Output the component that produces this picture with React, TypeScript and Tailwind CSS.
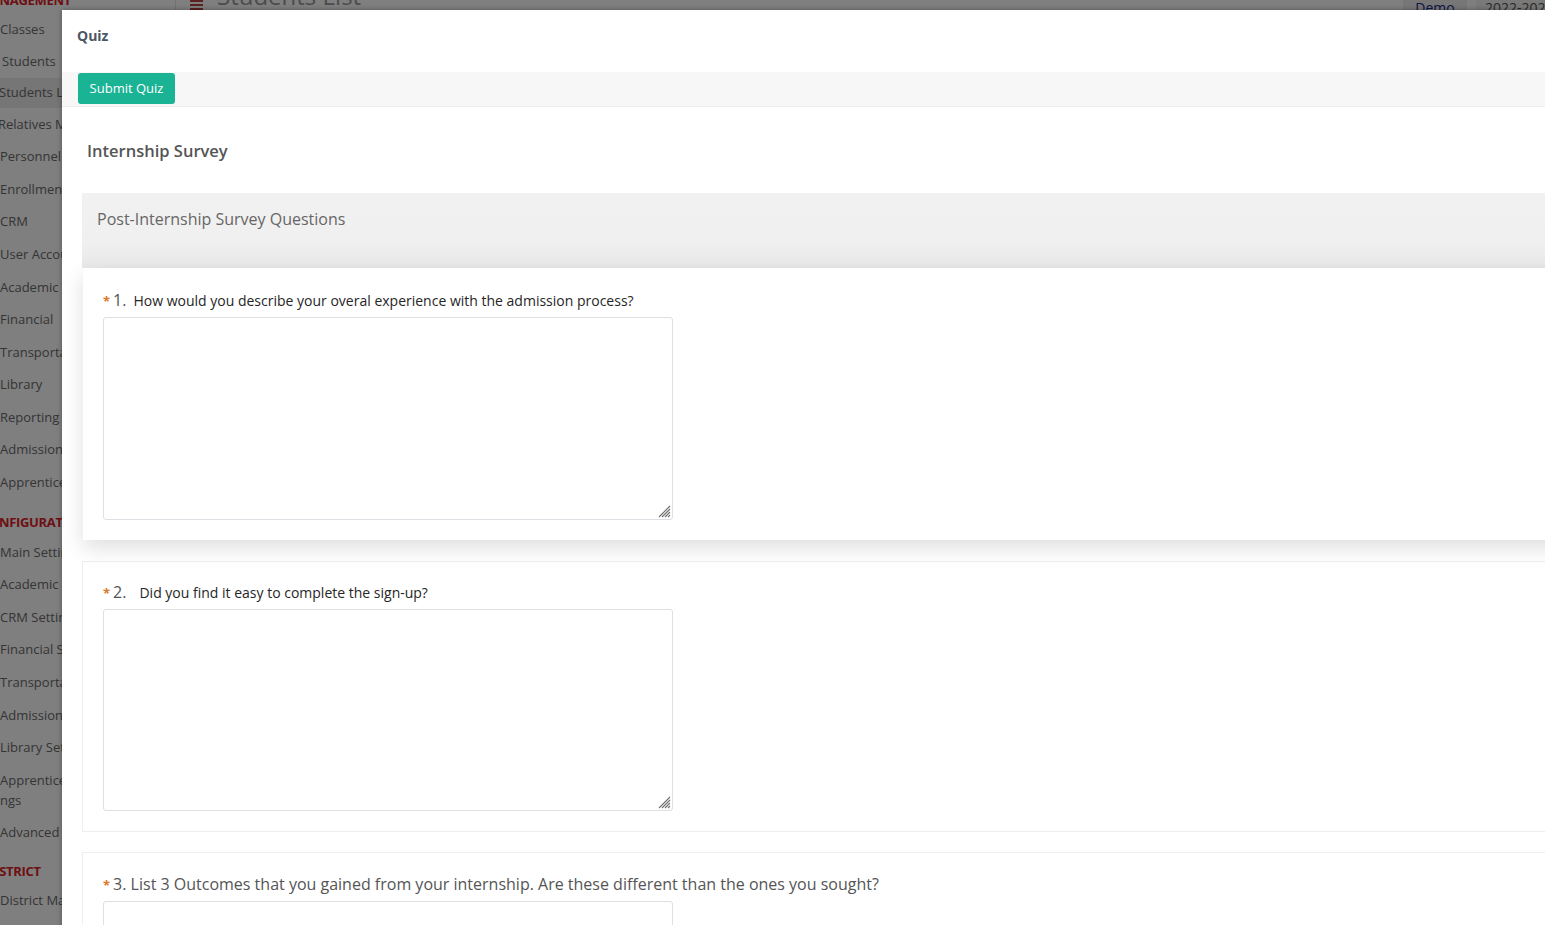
import React from 'react'

type NavItem = { label: string; h: string; kind: 'head' | 'item'; shift?: string; active?: boolean; lines?: string[]; pad?: string }

const NAV: NavItem[] = [
  { label: 'MANAGEMENT', h: 'h-[28px]', kind: 'head', shift: '-ml-[21px]' },
  { label: 'Classes', h: 'h-[32px]', kind: 'item' },
  { label: 'Students', h: 'h-[32px]', kind: 'item', shift: 'ml-[2px]' },
  { label: 'Students List', h: 'h-[30px]', kind: 'item', shift: '-ml-[1px]', active: true },
  { label: 'Relatives Management', h: 'h-[32.6px]', kind: 'item', shift: '-ml-[2px]' },
  { label: 'Personnel', h: 'h-[32.6px]', kind: 'item' },
  { label: 'Enrollment', h: 'h-[32.6px]', kind: 'item' },
  { label: 'CRM', h: 'h-[32.6px]', kind: 'item' },
  { label: 'User Accounts', h: 'h-[32.6px]', kind: 'item' },
  { label: 'Academic Terms', h: 'h-[32.6px]', kind: 'item' },
  { label: 'Financial', h: 'h-[32.6px]', kind: 'item' },
  { label: 'Transportation', h: 'h-[32.6px]', kind: 'item' },
  { label: 'Library', h: 'h-[32.6px]', kind: 'item' },
  { label: 'Reporting', h: 'h-[32.6px]', kind: 'item' },
  { label: 'Admission', h: 'h-[32.6px]', kind: 'item' },
  { label: 'Apprenticeship', h: 'h-[32.6px]', kind: 'item' },
  { label: 'CONFIGURATION', h: 'h-[37px]', kind: 'head', shift: '-ml-[19px]', pad: 'pt-[14px]' },
  { label: 'Main Settings', h: 'h-[32.6px]', kind: 'item' },
  { label: 'Academic Settings', h: 'h-[32.6px]', kind: 'item' },
  { label: 'CRM Settings', h: 'h-[32.6px]', kind: 'item' },
  { label: 'Financial Settings', h: 'h-[32.6px]', kind: 'item' },
  { label: 'Transportation Settings', h: 'h-[32.6px]', kind: 'item' },
  { label: 'Admission Settings', h: 'h-[32.6px]', kind: 'item' },
  { label: 'Library Settings', h: 'h-[32.6px]', kind: 'item' },
  { label: '', h: 'h-[52px]', kind: 'item', lines: ['Apprenticeship Setti', 'ngs'] },
  { label: 'Advanced Options', h: 'h-[32px]', kind: 'item' },
  { label: 'DISTRICT', h: 'h-[36px]', kind: 'head', shift: '-ml-[14px]', pad: 'pt-[14px]' },
  { label: 'District Management', h: 'h-[32px]', kind: 'item' },
]

const QUESTIONS = [
  { n: '1.', text: 'How would you describe your overal experience with the admission process?', gap: 'ml-[7px]', small: true },
  { n: '2.', text: 'Did you find it easy to complete the sign-up?', gap: 'ml-[13px]', small: true },
  { n: '3.', text: 'List 3 Outcomes that you gained from your internship. Are these different than the ones you sought?', gap: 'ml-[4px]', small: false },
]

function Sidebar() {
  return (
    <aside className="w-[176px] shrink-0 bg-white border-r border-[#e4e4e4] overflow-hidden">
      <div className="-mt-[14px] flex flex-col">
        {NAV.map((n, i) => (
          <div
            key={i}
            className={`${n.h} ${n.pad ?? ''} flex ${n.pad ? 'items-start' : 'items-center'} whitespace-nowrap ${n.active ? 'bg-[#ececec]' : ''}`}
          >
            {n.kind === 'head' ? (
              <span className={`${n.shift ?? ''} text-[13px] leading-[18px] font-bold text-[#dc2028] tracking-tight`}>{n.label}</span>
            ) : n.lines ? (
              <div className="flex flex-col text-[13px] leading-[20px] text-[#6a6a6a]">
                {n.lines.map(l => <span key={l}>{l}</span>)}
              </div>
            ) : (
              <span className={`${n.shift ?? ''} text-[13px] text-[#6a6a6a]`}>{n.label}</span>
            )}
          </div>
        ))}
      </div>
    </aside>
  )
}

function TopBar() {
  return (
    <div className="h-[50px] -mt-[40px] flex items-end bg-white">
      <div className="flex items-end pl-[14px] gap-[14px]">
        <div className="flex flex-col gap-[2px] w-[13px]">
          <span className="h-[2px] bg-[#b84444]" />
          <span className="h-[2px] bg-[#b84444]" />
          <span className="h-[2px] bg-[#b84444]" />
        </div>
        <span className="text-[24px] leading-[30px] text-[#999] translate-y-[1px]">Students List</span>
      </div>
      <div className="ml-auto flex items-end h-full gap-[9px] whitespace-nowrap">
        <div className="w-[64px] h-full bg-[#eeeeee] flex items-end justify-center">
          <span className="text-[14px] leading-[20px] text-[#1e2a8c] translate-y-[8px]">Demo</span>
        </div>
        <div className="w-[69px] h-full bg-[#f3f3f3] flex items-end pl-[9px] overflow-hidden">
          <span className="text-[14px] leading-[20px] text-[#555] translate-y-[8px]">2022-2023</span>
        </div>
      </div>
    </div>
  )
}

function ResizeGrip() {
  return (
    <svg className="absolute right-[2px] bottom-[2px]" width="13" height="13" viewBox="0 0 13 13">
      <g stroke="#6f6f6f" strokeWidth="1.1">
        <line x1="12" y1="1" x2="1" y2="12" />
        <line x1="12" y1="4" x2="4" y2="12" />
        <line x1="12" y1="7" x2="7" y2="12" />
        <line x1="12" y1="10" x2="10" y2="12" />
      </g>
    </svg>
  )
}

function Answer({ h }: { h: string }) {
  return (
    <div className={`relative mt-[5px] w-[570px] ${h}`}>
      <textarea className="block w-full h-full border border-[#dde0e4] rounded-[3px] bg-white resize-none" />
      <ResizeGrip />
    </div>
  )
}

function Question({ q }: { q: typeof QUESTIONS[number] }) {
  return (
    <div className="flex items-baseline h-[24px] leading-[24px]">
      <span className="text-[13px] font-bold text-[#d9772a]">*</span>
      {q.small ? (
        <>
          <span className="ml-[3px] text-[16px] text-[#555]">{q.n}</span>
          <span className={`${q.gap} text-[14px] text-[#262626]`}>{q.text}</span>
        </>
      ) : (
        <span className="ml-[3px] text-[16px] text-[#555]">{q.n} {q.text}</span>
      )}
    </div>
  )
}

export default function App() {
  return (
    <div className="relative w-[1545px] h-[925px] overflow-hidden" style={{ fontFamily: '"Open Sans", "Liberation Sans", sans-serif' }}>
      <div className="flex h-full">
        <Sidebar />
        <main className="flex-1 bg-white">
          <TopBar />
        </main>
      </div>

      <div className="absolute inset-0 bg-black/50" />

      <div className="absolute left-[62px] top-[10px] w-[1600px] h-[1000px] bg-white shadow-[0_0_5px_rgba(0,0,0,0.35)]">
        <div className="h-[62px] px-[15px] pt-[17px]">
          <h4 className="text-[14px] leading-[18px] font-bold text-[#4d5764]">Quiz</h4>
        </div>
        <div className="h-[35px] bg-[#f7f7f7] border-b border-[#ececec] pl-[16px] pt-[1px]">
          <button className="h-[31px] w-[97px] rounded-[3px] bg-[#1ab394] text-white text-[13px]">Submit Quiz</button>
        </div>

        <div className="px-[20px]">
          <h3 className="ml-[5px] pt-[32px] text-[16.5px] leading-[24px] font-semibold text-[#555]">Internship Survey</h3>

          <div className="mt-[30px] h-[75px] px-[15px] pt-[14px] bg-[linear-gradient(to_bottom,#f1f1f1_0%,#f0f0f0_65%,#e8e8e8_100%)]">
            <span className="text-[16px] leading-[24px] text-[#666]">Post-Internship Survey Questions</span>
          </div>

          <div className="ml-[1px] bg-white px-[20px] pt-[20px] pb-[20px] shadow-[0_8px_20px_rgba(0,0,0,0.13)] relative">
            <Question q={QUESTIONS[0]} />
            <Answer h="h-[203px]" />
          </div>

          <div className="mt-[21px] border border-[#eeeeee] bg-white px-[20px] pt-[18px] pb-[20px]">
            <Question q={QUESTIONS[1]} />
            <Answer h="h-[202px]" />
          </div>

          <div className="mt-[20px] border border-[#eeeeee] bg-white px-[20px] pt-[19px] pb-[20px]">
            <Question q={QUESTIONS[2]} />
            <Answer h="h-[202px]" />
          </div>
        </div>
      </div>
    </div>
  )
}
